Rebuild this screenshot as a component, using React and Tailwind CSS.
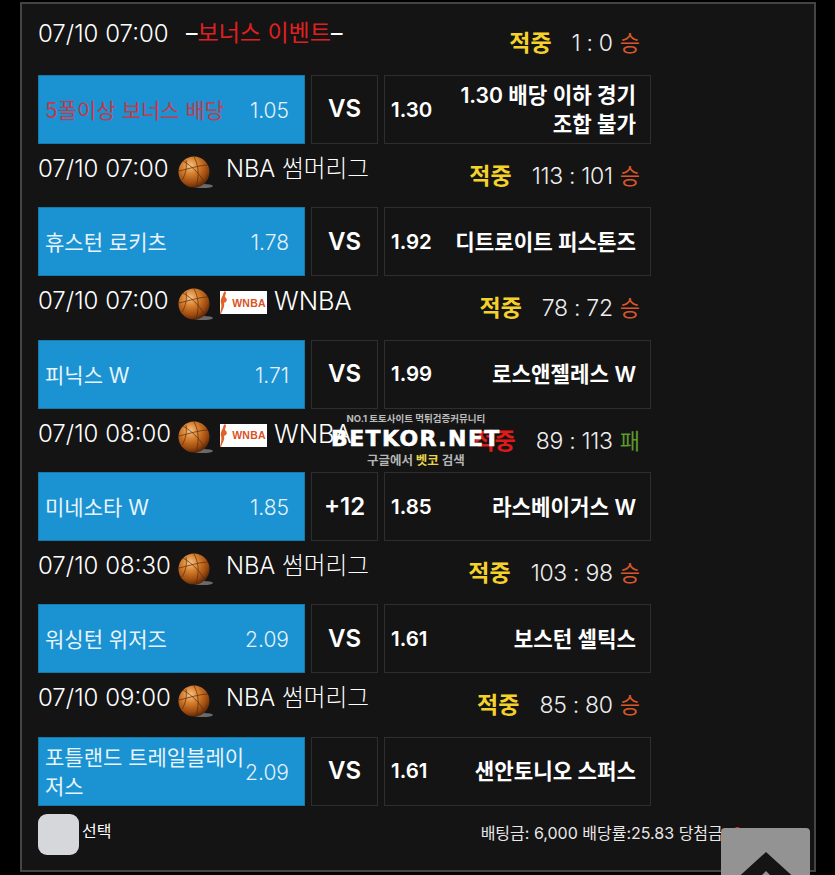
const games = [
  { time: "07/10 07:00", kind: "bonus", score: "1 : 0", res: "승", resC: "text-[#d8572a]", home: "5폴이상 보너스 배당", homeC: "text-[#c43a4a]", o1: "1.05", mid: "VS", o2: "1.30", away: <>1.30 배당 이하 경기<br />조합 불가</> },
  { time: "07/10 07:00", kind: "nba", score: "113 : 101", res: "승", resC: "text-[#d8572a]", home: "휴스턴 로키츠", o1: "1.78", mid: "VS", o2: "1.92", away: "디트로이트 피스톤즈" },
  { time: "07/10 07:00", kind: "wnba", score: "78 : 72", res: "승", resC: "text-[#d8572a]", home: "피닉스 W", o1: "1.71", mid: "VS", o2: "1.99", away: "로스앤젤레스 W" },
  { time: "07/10 08:00", kind: "wnba", red: true, score: "89 : 113", res: "패", resC: "text-[#5d9a2c]", home: "미네소타 W", o1: "1.85", mid: "+12", o2: "1.85", away: "라스베이거스 W" },
  { time: "07/10 08:30", kind: "nba", score: "103 : 98", res: "승", resC: "text-[#d8572a]", home: "워싱턴 위저즈", o1: "2.09", mid: "VS", o2: "1.61", away: "보스턴 셀틱스" },
  { time: "07/10 09:00", kind: "nba", score: "85 : 80", res: "승", resC: "text-[#d8572a]", home: "포틀랜드 트레일블레이저스", o1: "2.09", mid: "VS", o2: "1.61", away: "샌안토니오 스퍼스" },
];

function Ball({ id }) {
  return (
    <svg width="36" height="34" viewBox="0 0 36 34" className="shrink-0">
      <defs>
        <radialGradient id={id} cx="0.38" cy="0.3" r="0.75">
          <stop offset="0" stopColor="#f6c58a" />
          <stop offset="0.35" stopColor="#d8812f" />
          <stop offset="0.75" stopColor="#9c4a10" />
          <stop offset="1" stopColor="#4d2206" />
        </radialGradient>
      </defs>
      <ellipse cx="25" cy="30" rx="10" ry="2" fill="#6a6a6a" />
      <circle cx="16" cy="16" r="15.5" fill={`url(#${id})`} />
      <g fill="none" stroke="#5a2c0a" strokeWidth="0.7">
        <path d="M5 5 C14 10 24 20 27 28" />
        <path d="M1 15 C10 13 22 9 30 9" />
        <path d="M16 1 C20 8 22 18 18 31" />
        <path d="M4 24 C8 18 9 10 8 4" />
      </g>
    </svg>
  );
}

function WnbaLogo() {
  return (
    <span className="relative flex h-[23px] w-[47px] shrink-0 items-center justify-end bg-white pr-[1px]">
      <svg width="9" height="23" viewBox="0 0 9 23" className="absolute left-0 top-0">
        <path d="M5 0 C7 2 5 4 5 6 C8 8 7 11 4 12 C5 15 3 18 1 23 L0 23 C1 18 2 15 1 12 C0 9 2 6 3 4 C3 2 4 1 5 0Z" fill="#e0622a" />
      </svg>
      <span className="text-[10.5px] font-black leading-none tracking-[0.3px] text-[#d9531f] font-['Liberation_Sans',sans-serif]">WNBA</span>
    </span>
  );
}

function League({ g, i }) {
  if (g.kind === "bonus") {
    return (
      <span className="ml-[18px] text-[23px] leading-[27px] text-white">
        –<span className="text-[#e02020]">보너스 이벤트</span>–
      </span>
    );
  }
  if (g.kind === "nba") {
    return (
      <span className="ml-[10px] flex items-start">
        <span className="mt-[1px]"><Ball id={`b${i}`} /></span>
        <span className="ml-[12px] text-[23.7px] font-light leading-[27px] text-white">NBA 썸머리그</span>
      </span>
    );
  }
  return (
    <span className="ml-[10px] flex items-start">
      <span className="mt-[1px]"><Ball id={`b${i}`} /></span>
      <span className="ml-[6px] mt-[4px]"><WnbaLogo /></span>
      <span className="ml-[7px] text-[25.5px] font-light leading-[27px] text-white">WNBA</span>
    </span>
  );
}

export default function App() {
  return (
    <div className="h-[875px] w-[835px] overflow-hidden bg-black font-['Inter','Noto_Sans_CJK_KR',sans-serif]">
      <div className="relative mx-[20px] mt-[2px] h-[870px] w-[796px] border-2 border-[#444444] bg-[#141414] px-[16px] pt-[7.5px]">
        {games.map((g, i) => (
          <div key={i}>
            <div className="relative h-[63.4px]">
              <div className={`flex items-start ${i === 0 ? "pt-[8px]" : "pt-[11px]"}`}>
                <span className="w-[130px] whitespace-nowrap text-[24px] font-light leading-[27px] text-white">{g.time}</span>
                <League g={g} i={i} />
              </div>
              <div className={`absolute right-[158px] flex items-center ${i === 0 ? "top-[18px]" : "top-[19px]"}`}>
                <span className={`text-[23px] font-bold leading-[27px] ${g.red ? "text-[#e01a1a]" : "text-[#f4d22b]"}`}>적중</span>
                <span className="ml-[20px] text-[23px] font-light leading-[27px] tracking-[-0.3px] text-[#eeeeee]">{g.score}</span>
                <span className={`ml-[7px] text-[22px] leading-[27px] ${g.resC}`}>{g.res}</span>
              </div>
            </div>
            <div className="flex h-[69px] gap-[6px]">
              <div className={`flex w-[267px] items-center border border-[#157aa8] bg-[#1b92d1] pl-[6px] pr-[15px] pt-[2px] text-[21px] leading-[29px] ${g.homeC || "text-[#e8f4fb]"}`}>
                <span className="flex-1">{g.home}</span>
                <span className="text-[21px] font-light text-[#e3f1fa]">{g.o1}</span>
              </div>
              <div className="flex w-[67px] items-center justify-center border border-[#2e2e2e] text-[24px] font-semibold text-white">{g.mid}</div>
              <div className="flex w-[267px] items-center border border-[#2e2e2e] pl-[6px] pr-[14px] pt-[1px] font-semibold text-white">
                <span className="text-[20.5px]">{g.o2}</span>
                <span className="flex-1 text-right text-[21.2px] leading-[29px]">{g.away}</span>
              </div>
            </div>
          </div>
        ))}
        <div className="mt-[8px] flex items-start">
          <div className="h-[41px] w-[41px] rounded-[9px] bg-[#d5d7da]" />
          <span className="ml-[3px] mt-[6px] text-[16px] font-normal leading-[22px] text-white">선택</span>
          <span className="ml-auto mr-[56px] mt-[8px] whitespace-nowrap text-[16px] font-normal leading-[22px] text-[#e8e8e8]">
            배팅금: 6,000 배당률:25.83 당첨금: <span className="text-[#e02020]">0</span>
          </span>
        </div>

        <div className="absolute left-[309px] top-[408px] flex flex-col items-center">
          <span className="bg-[#161616] px-[1px] text-[9.5px] font-bold leading-[13px] text-[#bdbdbd]">NO.1 토토사이트 먹튀검증커뮤니티</span>
          <span className="mt-[2px] text-[22px] font-black leading-[24px] tracking-[1.4px] text-white font-['DejaVu_Sans',sans-serif] [-webkit-text-stroke:0.6px_#ffffff]">BETKOR.NET</span>
          <span className="mt-[3px] text-[12.5px] font-bold leading-[14px] text-[#b5b5b5]">구글에서 <span className="text-[#e8d44a]">벳코</span> 검색</span>
        </div>

        <div className="absolute left-[699px] top-[824px] flex h-[60px] w-[89px] justify-center rounded-[4px] bg-[#939393]">
          <svg width="66" height="47" viewBox="0 0 66 47" className="mt-[24px]">
            <path d="M33 0 L66 30 L46 47 L33 36 L20 47 L0 30 Z" fill="#141414" />
            <path d="M33 19 L46 32 L33 47 L20 32 Z" fill="#939393" />
          </svg>
        </div>
      </div>
    </div>
  );
}
